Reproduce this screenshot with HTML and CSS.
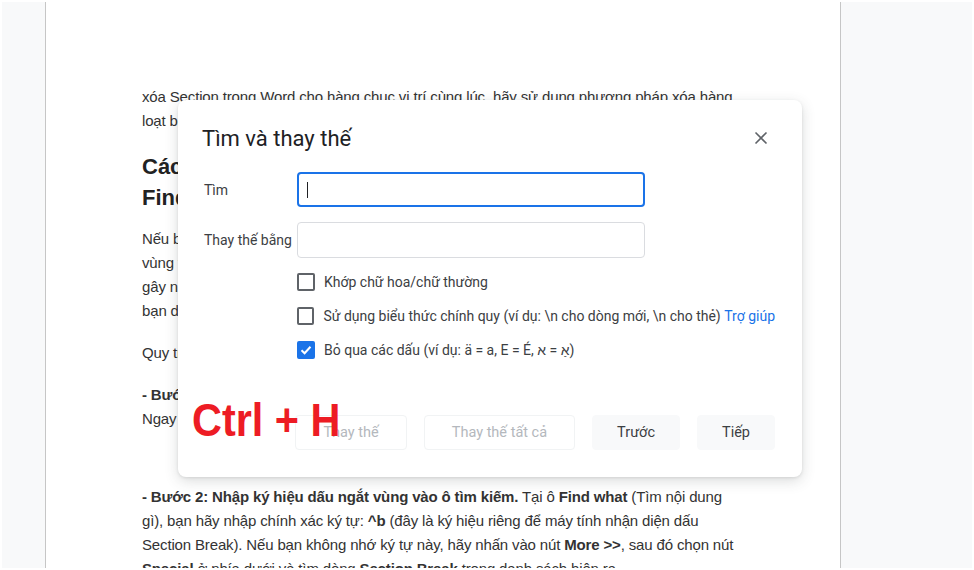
FILE: index.html
```html
<!DOCTYPE html>
<html>
<head>
  <title>Tìm và thay thế</title>
  <link rel="stylesheet" href="styles.css">
</head>
<body>

  <div class="viewport">

    <!-- Document page -->
    <div class="page">
      <p>xóa Section trong Word cho hàng chục vị trí cùng lúc, hãy sử dụng phương pháp xóa hàng<br>loạt bằng công cụ Find and Replace dưới đây.</p>

      <h2>Cách xóa Section Break hàng loạt bằng<br>Find and Replace</h2>

      <p>Nếu bạn đang làm việc với tài liệu dài có hàng chục dấu ngắt phân<br>vùng trong văn bản, việc xóa thủ công từng vị trí sẽ rất tốn thời gian và dễ<br>gây nhầm lẫn. Tính năng Find and Replace của Word sẽ giúp<br>bạn dọn dẹp toàn bộ chỉ trong vài giây.</p>

      <p>Quy trình thực hiện như sau:</p>

      <p class="step"><b>- Bước 1: Mở hộp thoại Find and Replace.</b><br>Ngay tại giao diện Word, nhấn tổ hợp phím Ctrl + H.</p>

      <p><b>- Bước 2: Nhập ký hiệu dấu ngắt vùng vào ô tìm kiếm.</b> Tại ô <b>Find what</b> (Tìm nội dung<br>gì), bạn hãy nhập chính xác ký tự: <b>^b</b> (đây là ký hiệu riêng để máy tính nhận diện dấu<br>Section Break). Nếu bạn không nhớ ký tự này, hãy nhấn vào nút <b>More &gt;&gt;</b>, sau đó chọn nút<br><b>Special</b> ở phía dưới và tìm dòng <b>Section Break</b> trong danh sách hiện ra.</p>
    </div>

    <!-- Find and replace dialog -->
    <div class="dialog">
      <div class="dialog-head">
        <h1>Tìm và thay thế</h1>
        <svg class="close" width="14" height="14" viewBox="0 0 14 14">
          <path d="M1.5 1.5 L12.5 12.5 M12.5 1.5 L1.5 12.5" stroke="#5f6368" stroke-width="1.6" fill="none"/>
        </svg>
      </div>

      <div class="fields">
        <label>Tìm</label>
        <div class="input active"><span class="caret"></span></div>
        <label>Thay thế bằng</label>
        <div class="input"></div>
      </div>

      <div class="options">
        <div class="option"><span class="box"></span>Khớp chữ hoa/chữ thường</div>
        <div class="option"><span class="box"></span>Sử dụng biểu thức chính quy (ví dụ: \n cho dòng mới, \n cho thẻ)&nbsp;<a>Trợ giúp</a></div>
        <div class="option">
          <span class="box checked">
            <svg width="14" height="14" viewBox="0 0 14 14"><path d="M2.5 7.2 L5.6 10.2 L11.5 3.8" stroke="#fff" stroke-width="2" fill="none"/></svg>
          </span>Bỏ qua các dấu (ví dụ: ä = a, E = É, א&lrm; = אַ&lrm;)</div>
      </div>

      <div class="actions">
        <button class="off">Thay thế</button>
        <button class="off">Thay thế tất cả</button>
        <button>Trước</button>
        <button>Tiếp</button>
      </div>
    </div>

    <div class="hotkey">Ctrl + H</div>

  </div>

</body>
</html>
```

FILE: styles.css
```css
body {
  margin: 0;
  background: #fff;
}

.viewport {
  position: relative;
  margin: 2px;
  height: 566px;
  overflow: hidden;
  background: #f8f9fa;
}

.page {
  margin-left: 43px;
  width: 698px;
  height: 100%;
  padding: 83px 0 0 96px;
  background: #fff;
  border-left: 1px solid #c6c6c6;
  border-right: 1px solid #c6c6c6;
  font-family: "Liberation Sans", Arial, sans-serif;
  font-size: 15px;
  line-height: 24px;
  letter-spacing: -0.15px;
  color: #333;
}

.page p {
  margin: 0 0 18px;
  white-space: nowrap;
}

.page h2 {
  margin: 0 0 14px;
  font-size: 22px;
  line-height: 31px;
  letter-spacing: 0;
  color: #222;
  white-space: nowrap;
}

.page .step {
  margin-bottom: 54px;
}

.dialog {
  position: absolute;
  left: 176px;
  top: 98px;
  width: 624px;
  height: 377px;
  box-sizing: border-box;
  padding: 24px 27px 0 26px;
  background: #fff;
  border-radius: 8px;
  box-shadow: 0 4px 14px rgba(60, 64, 67, 0.18), 0 1px 3px rgba(60, 64, 67, 0.12);
  font-family: Roboto, "Noto Sans", sans-serif;
  color: #3c4043;
}

.dialog-head {
  display: flex;
  justify-content: space-between;
  align-items: center;
  height: 28px;
}

.dialog-head h1 {
  margin: 0 0 0 -2px;
  font-size: 22px;
  font-weight: 400;
  color: #202124;
}

.close {
  margin-right: 7px;
}

.fields {
  display: grid;
  grid-template-columns: 93px 348px;
  row-gap: 15px;
  align-items: center;
  margin-top: 20px;
}

.fields label {
  font-size: 14px;
  color: #3c4043;
}

.input {
  height: 36px;
  box-sizing: border-box;
  border: 1px solid #dadce0;
  border-radius: 4px;
  display: flex;
  align-items: center;
  padding-left: 8px;
}

.input.active {
  height: 35px;
  border: 2px solid #1a73e8;
}

.caret {
  width: 1px;
  height: 16px;
  background: #202124;
}

.options {
  display: flex;
  flex-direction: column;
  gap: 16px;
  margin: 15px 0 0 93px;
}

.option {
  display: flex;
  align-items: center;
  height: 18px;
  font-size: 14px;
  color: #3c4043;
  white-space: nowrap;
}

.option a {
  color: #1a73e8;
}

.box {
  width: 18px;
  height: 18px;
  box-sizing: border-box;
  margin-right: 9px;
  border: 2px solid #5f6368;
  border-radius: 2px;
  display: flex;
  align-items: center;
  justify-content: center;
}

.box.checked {
  background: #1a73e8;
  border-color: #1a73e8;
}

.actions {
  display: flex;
  justify-content: flex-end;
  gap: 17px;
  margin-top: 56px;
}

.actions button {
  height: 35px;
  padding: 0 24px;
  border: 1px solid #f8f9fa;
  border-radius: 4px;
  background: #f8f9fa;
  font-family: Roboto, "Noto Sans", sans-serif;
  font-size: 14.5px;
  color: #3c4043;
}

.actions button.off {
  padding: 0 27px;
  background: #fff;
  border-color: #f1f3f4;
  color: #b4b8bd;
}

.hotkey {
  position: absolute;
  left: 190px;
  top: 390px;
  font-family: "Liberation Sans", sans-serif;
  font-weight: bold;
  font-size: 46px;
  line-height: 56px;
  color: #ed1c24;
  transform: scaleX(0.9);
  transform-origin: left center;
}
```
